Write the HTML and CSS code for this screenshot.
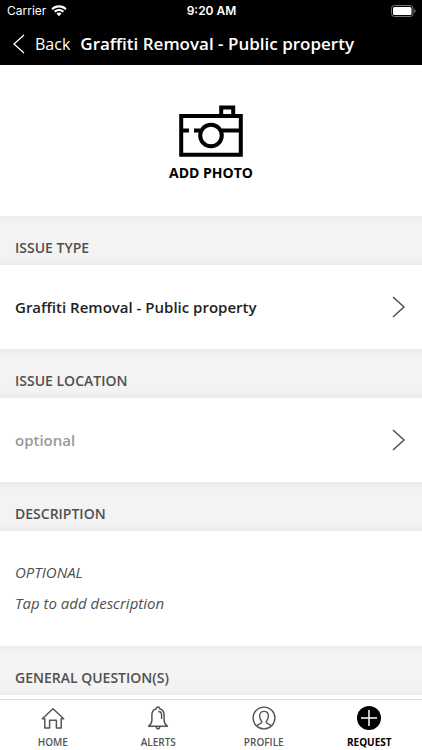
FILE: index.html
```html
<!DOCTYPE html>
<html lang="en">
<head>
<meta charset="utf-8">
<meta name="viewport" content="width=device-width, initial-scale=1">
<title>Graffiti Removal - Public property</title>
<link rel="stylesheet" href="styles.css">
</head>
<body>
<header class="top">
  <div class="status">
    <div class="carrier">Carrier
      <svg width="16" height="12" viewBox="0 0 16 12" fill="#fff" aria-hidden="true">
        <path d="M8 0.3C5 .3 2.300 1.500 .4 3.400l1.500 1.600C3.500 3.400 5.600 2.500 8 2.500s4.500.9 6.100 2.500l1.500-1.600C13.700 1.500 11 .3 8 .3z"/>
        <path d="M8 4C6 4 4.200 4.800 2.900 6.100l1.500 1.500C5.300 6.700 6.600 6.100 8 6.100s2.700.6 3.600 1.500l1.500-1.500C11.800 4.800 10 4 8 4z"/>
        <path d="M8 7.600c-1 0-1.900.4-2.500 1L8 11.300l2.500-2.700c-.6-.6-1.500-1-2.500-1z"/>
      </svg>
    </div>
    <div class="clock">9:20 AM</div>
    <div class="battery">
      <svg width="25" height="12" viewBox="0 0 25 12" aria-hidden="true">
        <rect x=".5" y=".5" width="21.500" height="11" rx="3" fill="none" stroke="#777"/>
        <rect x="2" y="2" width="18.500" height="8" rx="1.500" fill="#fff"/>
        <path d="M23.300 4v4c.8-.3 1.300-1.100 1.300-2s-.5-1.700-1.300-2z" fill="#777"/>
      </svg>
    </div>
  </div>
  <div class="bar">
    <a class="back" href="#home">
      <svg width="12" height="20" viewBox="0 0 12 20" aria-hidden="true"><path d="M11 1 1 10l10 9" fill="none" stroke="#fff" stroke-width="1.300"/></svg>
      Back
    </a>
    <h1 class="title">Graffiti Removal - Public property</h1>
  </div>
</header>

<main class="content">
  <button class="photo" type="button">
    <svg width="64" height="52" viewBox="0 0 64 52" fill="none" stroke="#000" stroke-width="4" aria-hidden="true">
      <path d="M2.200 11h59.600v38.700H2.200zM42.200 11V2.500h12V11M4 25.500h6M15 25.500h6M43 25.500h19"/>
      <circle cx="32" cy="30.500" r="10.800"/>
    </svg>
    <span class="photo-label">ADD PHOTO</span>
  </button>

  <h2 class="band">ISSUE TYPE</h2>
  <a class="row" href="#type">
    Graffiti Removal - Public property
    <svg width="14" height="22" viewBox="0 0 14 22" aria-hidden="true"><path d="M1 1l11 10L1 21" fill="none" stroke="#4a4a4a" stroke-width="1.400"/></svg>
  </a>

  <h2 class="band">ISSUE LOCATION</h2>
  <a class="row empty" href="#location">
    optional
    <svg width="14" height="22" viewBox="0 0 14 22" aria-hidden="true"><path d="M1 1l11 10L1 21" fill="none" stroke="#4a4a4a" stroke-width="1.400"/></svg>
  </a>

  <h2 class="band">DESCRIPTION</h2>
  <div class="description">
    <label for="description">OPTIONAL</label>
    <textarea id="description" rows="1" placeholder="Tap to add description"></textarea>
  </div>

  <h2 class="band">GENERAL QUESTION(S)</h2>
  <div class="questions"></div>
</main>

<nav class="tabs">
  <a class="tab" href="#home">
    <svg width="24" height="24" viewBox="0 0 24 24" fill="none" stroke="#555" stroke-width="1.500" aria-hidden="true">
      <path d="M3.800 12.800H1.300L12 2.700l10.700 10.100h-2.500v9.100h-4.800v-7.600H8.600v7.600H3.800z" stroke-linejoin="round"/>
    </svg>
    HOME
  </a>
  <a class="tab" href="#alerts">
    <svg width="24" height="24" viewBox="0 0 24 24" fill="none" stroke="#555" stroke-width="1.500" aria-hidden="true">
      <path d="M10.300 2.800c0-2.300 3.400-2.300 3.400 0 2.900.9 4.400 3.300 4.400 6.200v5.200c0 2.500.9 4.100 3.200 6H2.700c2.300-1.900 3.200-3.500 3.200-6V9c0-2.900 1.500-5.300 4.400-6.200zM10.300 20.400c0 3.100 3.400 3.100 3.400 0M12.300 5.500c2.200 0 3.300 1.300 3.300 3.500v4" stroke-linejoin="round"/>
    </svg>
    ALERTS
  </a>
  <a class="tab" href="#profile">
    <svg width="24" height="24" viewBox="0 0 24 24" fill="none" stroke="#555" stroke-width="1.400" aria-hidden="true">
      <circle cx="12" cy="12" r="10.900"/>
      <path d="M4.800 20.100c.7-1.600 2.500-2.200 4.400-3 .9-.4.900-1.200.3-2C8.200 13.500 7.600 12 7.600 10c0-2.900 1.700-4.600 4.400-4.600s4.400 1.700 4.400 4.600c0 2-.6 3.500-1.900 5.100-.6.800-.6 1.600.3 2 1.900.8 3.700 1.400 4.400 3"/>
    </svg>
    PROFILE
  </a>
  <a class="tab active" href="#request" aria-current="page">
    <svg width="24" height="24" viewBox="0 0 24 24" fill="none" aria-hidden="true">
      <circle cx="12" cy="12" r="12" fill="#000"/>
      <path d="M12 4v16M4 12h16" stroke="#fff" stroke-width="1.500"/>
    </svg>
    REQUEST
  </a>
</nav>
</body>
</html>
```
FILE: styles.css
```css
* { box-sizing: border-box; }

body {
  margin: 0;
  height: 100vh;
  display: flex;
  flex-direction: column;
  background: #fff;
  color: #222;
  font-family: "Open Sans", "Noto Sans", sans-serif;
  font-size: 15px;
  line-height: 20px;
}

a { color: inherit; text-decoration: none; }

svg { display: block; flex: none; }

.top { flex: none; background: #000; color: #fff; }

.status {
  display: grid;
  grid-template-columns: 1fr auto 1fr;
  align-items: center;
  height: 22px;
  padding: 0 6px 0 7px;
  font-family: Inter, sans-serif;
  font-size: 12px;
}

.carrier { display: flex; align-items: center; gap: 5px; }
.clock { font-weight: 600; }
.battery { justify-self: end; }

.bar {
  display: flex;
  align-items: center;
  gap: 10px;
  height: 43px;
  padding: 0 13px;
}

.back { display: flex; align-items: center; gap: 10px; font-size: 16px; }

.title {
  margin: 0;
  font-size: 17px;
  font-weight: 600;
  white-space: nowrap;
}

.content {
  flex: 1;
  min-height: 0;
  overflow-y: auto;
  scrollbar-width: none;
}

.photo {
  display: flex;
  flex-direction: column;
  align-items: center;
  gap: 6px;
  width: 100%;
  padding: 40px 0 33px;
  border: 0;
  background: #fff;
  color: #000;
  font: inherit;
}

.photo-label { font-size: 14px; font-weight: 700; }

.band {
  margin: 0;
  padding: 22px 15px 7px;
  background: linear-gradient(#ececec, #f3f3f3 8px, #f3f3f3 41px, #ececec);
  color: #505050;
  font-size: 14px;
  font-weight: 600;
}

.row {
  display: flex;
  align-items: center;
  justify-content: space-between;
  min-height: 84px;
  padding: 0 16px 0 15px;
  font-weight: 600;
}

.empty { color: #999; }

.description {
  display: flex;
  flex-direction: column;
  gap: 11px;
  padding: 31px 15px 33px;
  color: #505050;
  font-style: italic;
}

.description textarea {
  display: block;
  width: 100%;
  padding: 0;
  border: 0;
  outline: 0;
  resize: none;
  overflow: hidden;
  background: none;
  color: inherit;
  font: inherit;
}

.description textarea::placeholder { color: inherit; opacity: 1; }

.questions { min-height: 84px; }

.tabs {
  flex: none;
  display: grid;
  grid-template-columns: repeat(4, 1fr);
  border-top: 1px solid #dcdcdc;
  background: #fff;
}

.tab {
  display: flex;
  flex-direction: column;
  align-items: center;
  gap: 4px;
  padding: 6px 0 0;
  color: #555;
  font-size: 10px;
  font-weight: 600;
  line-height: 16px;
}

.active { color: #000; font-weight: 700; }
```
